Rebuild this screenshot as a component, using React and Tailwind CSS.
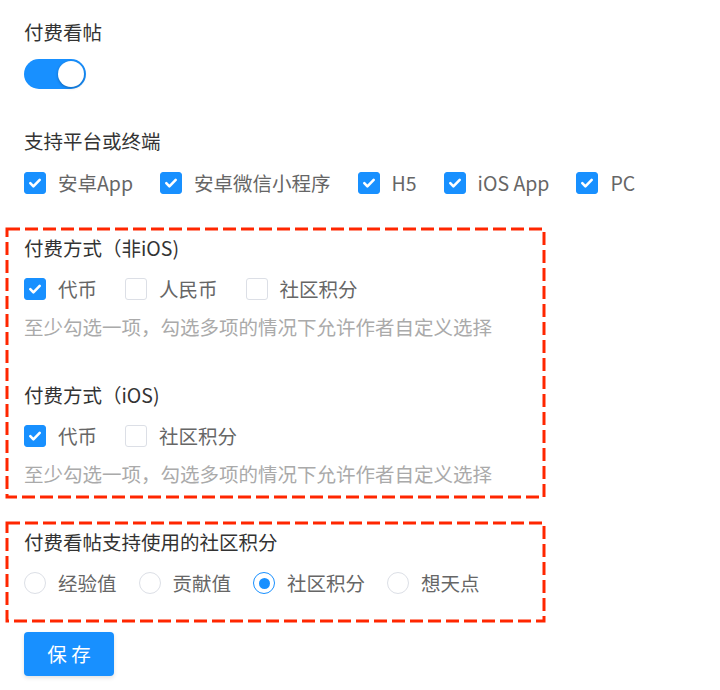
import React from "react";

const platforms = ["安卓App", "安卓微信小程序", "H5", "iOS App", "PC"];
const hint = "至少勾选一项，勾选多项的情况下允许作者自定义选择";

function Checkbox({ label, checked }) {
  return (
    <label className="flex items-center">
      <span
        className={`flex h-[22px] w-[22px] items-center justify-center rounded-[3px] border ${
          checked ? "border-[#1890ff] bg-[#1890ff]" : "border-[#dcdfe6] bg-white"
        }`}
      >
        {checked && (
          <svg width="16" height="16" viewBox="0 0 16 16" fill="none">
            <path d="M3.3 8.2l3.1 3.1 6.3-6.4" stroke="white" strokeWidth="2.6" strokeLinecap="round" strokeLinejoin="round" />
          </svg>
        )}
      </span>
      <span className="ml-3 text-[#666]">{label}</span>
    </label>
  );
}

function Radio({ label, checked }) {
  return (
    <label className="flex items-center">
      <span
        className={`flex h-[22px] w-[22px] items-center justify-center rounded-full bg-white ${
          checked ? "border-[1.5px] border-[#1890ff]" : "border border-[#dcdfe6]"
        }`}
      >
        {checked && <span className="h-[11px] w-[11px] rounded-full bg-[#1890ff]" />}
      </span>
      <span className="ml-3 text-[#666]">{label}</span>
    </label>
  );
}

// red dashed frame drawn over the group
function DashedBox({ children, className = "" }) {
  return (
    <div className={`relative w-[540px] pl-[19px] pt-[7px] ${className}`}>
      <svg className="pointer-events-none absolute left-[1.5px] top-[1.5px] h-[calc(100%-3px)] w-[calc(100%-3px)] overflow-visible">
        <rect x="0" y="0" width="100%" height="100%" fill="none" stroke="#ff2600" strokeWidth="3" strokeDasharray="13 5" />
      </svg>
      {children}
    </div>
  );
}

export default function App() {
  return (
    <div className="min-h-[690px] w-[720px] bg-white pl-[5px] font-['Noto_Sans_CJK_SC',sans-serif] text-[19.5px] leading-[28px]">
      <div className="pl-[19px] pt-[18px]">
        <div className="text-[#333]">付费看帖</div>
        <div className="mt-[13px] flex h-[30px] w-[62px] items-center justify-end rounded-full bg-[#1890ff] px-[2px]">
          <span className="h-[26px] w-[26px] rounded-full bg-white shadow-[0_1px_3px_rgba(0,0,0,0.3)]" />
        </div>

        <div className="mt-[38px] text-[#333]">支持平台或终端</div>
        <div className="mt-[14px] flex gap-[27px]">
          {platforms.map((p) => (
            <Checkbox key={p} label={p} checked />
          ))}
        </div>
      </div>

      <DashedBox className="mt-[30px] pb-[10px]">
        <div className="text-[#333]">付费方式（非iOS)</div>
        <div className="mt-[13px] flex gap-[28px]">
          <Checkbox label="代币" checked />
          <Checkbox label="人民币" />
          <Checkbox label="社区积分" />
        </div>
        <div className="mt-[10px] text-[#aaaaaa]">{hint}</div>

        <div className="mt-[40px] text-[#333]">付费方式（iOS)</div>
        <div className="mt-[13px] flex gap-[28px]">
          <Checkbox label="代币" checked />
          <Checkbox label="社区积分" />
        </div>
        <div className="mt-[10px] text-[#aaaaaa]">{hint}</div>
      </DashedBox>

      <DashedBox className="mt-[23px] pb-[25px]">
        <div className="text-[#333]">付费看帖支持使用的社区积分</div>
        <div className="mt-[13px] flex gap-[22px]">
          <Radio label="经验值" />
          <Radio label="贡献值" />
          <Radio label="社区积分" checked />
          <Radio label="想天点" />
        </div>
      </DashedBox>

      <div className="pl-[19px] pt-[10px]">
        <button className="h-[44px] w-[90px] rounded-[4px] bg-[#1890ff] text-white shadow-[0_2px_4px_rgba(0,0,0,0.12)]">
          保 存
        </button>
      </div>
    </div>
  );
}
